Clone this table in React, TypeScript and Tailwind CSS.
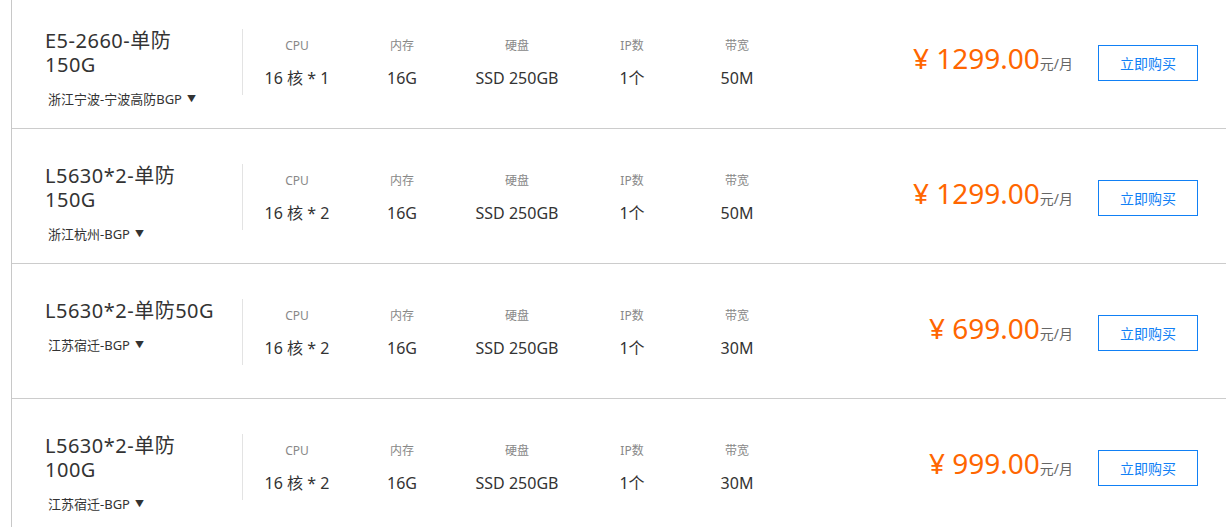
import React from "react";

interface Plan {
  title: string;
  location: string;
  cpu: string;
  mem: string;
  disk: string;
  ip: string;
  bandwidth: string;
  price: string;
}

const plans: Plan[] = [
  { title: "E5-2660-单防150G", location: "浙江宁波-宁波高防BGP", cpu: "16 核 * 1", mem: "16G", disk: "SSD 250GB", ip: "1个", bandwidth: "50M", price: "1299.00" },
  { title: "L5630*2-单防150G", location: "浙江杭州-BGP", cpu: "16 核 * 2", mem: "16G", disk: "SSD 250GB", ip: "1个", bandwidth: "50M", price: "1299.00" },
  { title: "L5630*2-单防50G", location: "江苏宿迁-BGP", cpu: "16 核 * 2", mem: "16G", disk: "SSD 250GB", ip: "1个", bandwidth: "30M", price: "699.00" },
  { title: "L5630*2-单防100G", location: "江苏宿迁-BGP", cpu: "16 核 * 2", mem: "16G", disk: "SSD 250GB", ip: "1个", bandwidth: "30M", price: "999.00" },
];

const Spec = ({ label, value, width }: { label: string; value: string; width: string }) => (
  <div className={`${width} flex flex-col items-center`}>
    <div className="text-[12px] leading-[18px] text-[#888] mt-[8px]">{label}</div>
    <div className="text-[16px] leading-[22px] text-[#333] mt-[12px]">{value}</div>
  </div>
);

const PlanRow = ({ plan }: { plan: Plan }) => (
  <div className="h-[135px] border-b border-[#cccccc] flex items-start pt-[35px]">
    <div className="w-[230px] pl-[33px]">
      <div className="w-[175px] text-[20px] leading-[24px] tracking-[0.5px] text-[#333]">{plan.title}</div>
      <div className="mt-[12px] pl-[3px] text-[13px] leading-[20px] text-[#333] flex items-center">
        {plan.location}
        <span className="ml-[5px] text-[9px]">▼</span>
      </div>
    </div>
    <div className="h-[66px] border-l border-[#e3e3e3] flex">
      <Spec label="CPU" value={plan.cpu} width="w-[108px]" />
      <Spec label="内存" value={plan.mem} width="w-[102px]" />
      <Spec label="硬盘" value={plan.disk} width="w-[128px]" />
      <Spec label="IP数" value={plan.ip} width="w-[102px]" />
      <Spec label="带宽" value={plan.bandwidth} width="w-[108px]" />
    </div>
    <div className="flex-1 flex justify-end items-baseline mt-[10px]">
      <span className="text-[28px] leading-[38px] text-[#ff6600]">¥ {plan.price}</span>
      <span className="text-[14px] text-[#666]">元/月</span>
    </div>
    <button className="ml-[25px] mr-[28px] mt-[16px] w-[100px] h-[36px] border border-[#1180f5] text-[#1180f5] text-[14px] bg-white">
      立即购买
    </button>
  </div>
);

export default function App() {
  return (
    <div className="bg-white h-[527px] overflow-hidden font-['Noto_Sans','Noto_Sans_CJK_SC',sans-serif]">
      <div className="ml-[11px] border-l border-[#c8c8c8] mt-[-6px]">
        {plans.map((p) => (
          <PlanRow key={p.title + p.price} plan={p} />
        ))}
      </div>
    </div>
  );
}
